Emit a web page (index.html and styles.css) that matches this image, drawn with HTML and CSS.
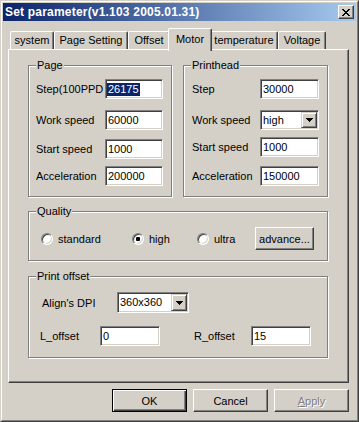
FILE: index.html
```html
<!DOCTYPE html>
<html>
<head>
<meta charset="utf-8">
<link rel="stylesheet" href="styles.css">
</head>
<body>
<div class="window">
  <div class="frame">
    <div class="titlebar">
      <span class="title">Set parameter(v1.103 2005.01.31)</span>
      <span class="close"><svg width="8" height="7" viewBox="0 0 8 7" shape-rendering="crispEdges"><path d="M0 0h2v1H0z M6 0h2v1H6z M1 1h2v1H1z M5 1h2v1H5z M2 2h4v1H2z M3 3h2v1H3z M2 4h4v1H2z M1 5h2v1H1z M5 5h2v1H5z M0 6h2v1H0z M6 6h2v1H6z" fill="#000"/></svg></span>
    </div>
    <div class="tabs">
      <div class="tab w-system">system</div>
      <div class="tab w-page">Page Setting</div>
      <div class="tab w-offset">Offset</div>
      <div class="tab active w-motor">Motor</div>
      <div class="tab w-temp">temperature</div>
      <div class="tab w-volt">Voltage</div>
    </div>
    <div class="panel">
      <div class="cols">
        <fieldset class="group">
          <legend>Page</legend>
          <div class="fields page-fields">
            <div class="row"><span class="lbl">Step(100PPD</span><span class="field"><span class="sel">26175</span></span></div>
            <div class="row g11"><span class="lbl">Work speed</span><span class="field">60000</span></div>
            <div class="row g9"><span class="lbl">Start speed</span><span class="field">1000</span></div>
            <div class="row g7"><span class="lbl">Acceleration</span><span class="field">200000</span></div>
          </div>
        </fieldset>
        <fieldset class="group">
          <legend>Printhead</legend>
          <div class="fields head-fields">
            <div class="row"><span class="lbl">Step</span><span class="field">30000</span></div>
            <div class="row g11"><span class="lbl">Work speed</span><span class="combo"><span class="value">high</span><span class="drop"><svg width="7" height="4" viewBox="0 0 7 4" shape-rendering="crispEdges"><path d="M0 0h7v1H0z M1 1h5v1H1z M2 2h3v1H2z M3 3h1v1H3z" fill="#000"/></svg></span></span></div>
            <div class="row g7"><span class="lbl">Start speed</span><span class="field">1000</span></div>
            <div class="row g9"><span class="lbl">Acceleration</span><span class="field">150000</span></div>
          </div>
        </fieldset>
      </div>
      <fieldset class="group quality">
        <legend>Quality</legend>
        <div class="radios">
          <span class="radio"><span class="dot-box"></span>standard</span>
          <span class="radio"><span class="dot-box"><span class="dot"></span></span>high</span>
          <span class="radio"><span class="dot-box"></span>ultra</span>
          <span class="btn advance">advance...</span>
        </div>
      </fieldset>
      <fieldset class="group offset">
        <legend>Print offset</legend>
        <div class="offset-body">
          <div class="dpi-row">
            <span class="dpi-lbl">Align's DPI</span>
            <span class="combo dpi"><span class="value">360x360</span><span class="drop"><svg width="7" height="4" viewBox="0 0 7 4" shape-rendering="crispEdges"><path d="M0 0h7v1H0z M1 1h5v1H1z M2 2h3v1H2z M3 3h1v1H3z" fill="#000"/></svg></span></span>
          </div>
          <div class="off-row">
            <span class="off-lbl">L_offset</span>
            <span class="field off-field">0</span>
            <span class="off-lbl r">R_offset</span>
            <span class="field off-field">15</span>
          </div>
        </div>
      </fieldset>
    </div>
    <div class="buttons">
      <span class="btn big default">OK</span>
      <span class="btn big">Cancel</span>
      <span class="btn big disabled"><u>A</u>pply</span>
    </div>
  </div>
</div>
</body>
</html>
```
FILE: styles.css
```css
* { box-sizing: border-box; }
body {
  margin: 0;
  background: #D4D0C8;
  font: 11px "Liberation Sans", Arial, sans-serif;
  color: #000;
}
.window {
  width: 359px;
  height: 422px;
  border: 1px solid;
  border-color: #D4D0C8 #404040 #404040 #D4D0C8;
}
.frame {
  height: 100%;
  border: 1px solid;
  border-color: #fff #808080 #808080 #fff;
  padding: 1px;
  display: flex;
  flex-direction: column;
}
.titlebar {
  height: 18px;
  flex: none;
  display: flex;
  align-items: center;
  justify-content: space-between;
  padding: 0 2px;
  background: linear-gradient(to right, #0A246A, #A6CAF0);
}
.title {
  color: #fff;
  font-weight: bold;
  font-size: 12px;
  letter-spacing: 0.2px;
  line-height: 14px;
}
.close {
  width: 16px;
  height: 14px;
  display: flex;
  align-items: center;
  justify-content: center;
  background: #D4D0C8;
  border: 1px solid;
  border-color: #fff #404040 #404040 #fff;
  box-shadow: inset -1px -1px 0 #808080;
}
.close svg { display: block; }

.tabs {
  display: flex;
  align-items: flex-end;
  margin: 7px 0 0 7px;
  flex: none;
}
.tab {
  height: 18px;
  padding-top: 2px;
  line-height: 13px;
  text-align: center;
  border-top: 1px solid #fff;
  border-left: 1px solid #fff;
  border-right: 1px solid #404040;
  border-radius: 2px 2px 0 0;
  box-shadow: inset -1px 0 0 #808080;
  background: #D4D0C8;
}
.tab.active {
  height: 23px;
  padding-top: 4px;
  margin: 0 -2px -2px;
  position: relative;
  z-index: 1;
}
.w-system { width: 44px; }
.w-page { width: 74px; }
.w-offset { width: 42px; }
.w-motor { width: 44px; }
.w-temp { width: 68px; }
.w-volt { width: 48px; }

.panel {
  margin-left: 5px;
  width: 341px;
  height: 334px;
  flex: none;
  border: 1px solid;
  border-color: #fff #404040 #404040 #fff;
  box-shadow: inset -1px -1px 0 #808080;
  padding: 9px 0 0 19px;
}
.cols {
  display: grid;
  grid-template-columns: 144px 145px;
  column-gap: 11px;
}
.group {
  margin: 0;
  padding: 0;
  min-width: 0;
  border: 1px solid #808080;
  box-shadow: 1px 1px 0 #fff, inset 1px 1px 0 #fff;
}
.group legend {
  margin-left: 7px;
  padding: 0 1px;
  line-height: 13px;
  background: #D4D0C8;
}
.fields {
  display: flex;
  flex-direction: column;
  padding: 7px 0 10px 7px;
}
.head-fields { padding-left: 8px; }
.row {
  display: grid;
  align-items: center;
  height: 20px;
}
.page-fields .row { grid-template-columns: 69px 58px; }
.head-fields .row { grid-template-columns: 68px 59px; }
.g11 { margin-top: 11px; }
.g9 { margin-top: 9px; }
.g7 { margin-top: 7px; }
.lbl { white-space: nowrap; overflow: hidden; }

.field {
  height: 20px;
  display: flex;
  align-items: center;
  background: #fff;
  border: 1px solid;
  border-color: #808080 #fff #fff #808080;
  box-shadow: inset 1px 1px 0 #404040, inset -1px -1px 0 #D4D0C8;
  padding-left: 2px;
  line-height: 13px;
}
.sel {
  background: #0A246A;
  color: #fff;
  margin-left: -1px;
  padding: 0 1px;
}
.combo {
  height: 20px;
  display: flex;
  background: #fff;
  border: 1px solid;
  border-color: #808080 #fff #fff #808080;
  box-shadow: inset 1px 1px 0 #404040, inset -1px -1px 0 #D4D0C8;
  padding: 1px;
}
.combo .value {
  flex: 1;
  padding-left: 1px;
  line-height: 16px;
}
.drop {
  width: 16px;
  display: flex;
  align-items: center;
  justify-content: center;
  background: #D4D0C8;
  border: 1px solid;
  border-color: #D4D0C8 #404040 #404040 #D4D0C8;
  box-shadow: inset 1px 1px 0 #fff, inset -1px -1px 0 #808080;
}
.drop svg { display: block; }

.quality { margin-top: 8px; width: 300px; }
.radios {
  display: grid;
  grid-template-columns: 91px 65px 58px 59px;
  align-items: center;
  padding: 9px 0 10px 12px;
}
.radio {
  display: flex;
  align-items: center;
  gap: 5px;
}
.dot-box {
  width: 12px;
  height: 12px;
  flex: none;
  border-radius: 50%;
  background: #fff;
  border: 1px solid;
  border-color: #808080 #fff #fff #808080;
  box-shadow: inset 1px 1px 0 #404040, inset -1px -1px 0 #D4D0C8;
  display: flex;
  align-items: center;
  justify-content: center;
}
.dot {
  width: 4px;
  height: 4px;
  border-radius: 1px;
  background: #000;
}
.btn {
  display: flex;
  align-items: center;
  justify-content: center;
  height: 23px;
  background: #D4D0C8;
  border: 1px solid;
  border-color: #fff #404040 #404040 #fff;
  box-shadow: inset -1px -1px 0 #808080;
}
.advance { width: 59px; }

.offset { margin-top: 9px; width: 300px; }
.offset-body { padding: 9px 0 11px 13px; }
.dpi-row {
  display: flex;
  align-items: center;
}
.dpi-lbl { width: 75px; }
.combo.dpi { width: 72px; height: 21px; }
.off-row {
  display: flex;
  align-items: center;
  margin: 13px 0 0 -2px;
}
.off-lbl { width: 60px; }
.off-lbl.r { width: 57px; margin-left: 34px; }
.off-field { width: 60px; }

.buttons {
  display: flex;
  justify-content: flex-end;
  gap: 6px;
  margin: 6px 7px 0 0;
}
.btn.big { width: 75px; }
.btn.default {
  border-color: #000;
  box-shadow: inset 1px 1px 0 #fff, inset -1px -1px 0 #404040, inset -2px -2px 0 #808080;
}
.btn.disabled {
  color: #808080;
  text-shadow: 1px 1px 0 #fff;
}
.btn.disabled u { text-decoration-color: #808080; }
```
